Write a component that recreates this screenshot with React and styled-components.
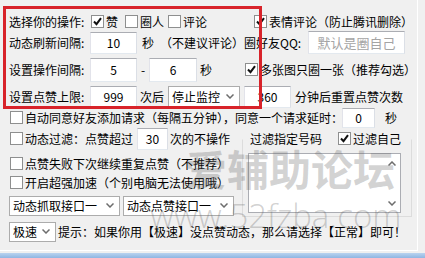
import React from 'react';
import styled, { createGlobalStyle } from 'styled-components';

const GlobalStyle = createGlobalStyle`
  html, body {
    margin: 0;
    padding: 0;
    background: #f0f0f0;
  }
  body {
    width: 425px;
    height: 258px;
    overflow: hidden;
    font-family: "Noto Sans CJK SC", "Microsoft YaHei", sans-serif;
    font-size: 12px;
    color: #000;
  }
`;

const Window = styled.div`
  position: relative;
  width: 425px;
  height: 258px;
  background: #f0f0f0;
  display: flex;
  flex-direction: column;
  overflow: hidden;
`;

const Panel = styled.div`
  width: 418px;
  height: 251px;
  box-sizing: border-box;
  padding: 11px 0 0 9px;
  border-right: 1px solid #fff;
  border-bottom: 1px solid #fff;
  display: flex;
  flex-direction: column;
`;

const FrameBottom = styled.div`
  margin-top: 2px;
  height: 5px;
  background: linear-gradient(#b9d3ef, #8fb6e2);
`;

const Row = styled.div`
  display: flex;
  align-items: center;
  height: 21px;
  flex: none;
  margin-top: ${p => p.$mt || 0}px;
  white-space: nowrap;
`;

const Cell = styled.div`
  display: flex;
  align-items: center;
  width: ${p => (p.$w ? `${p.$w}px` : 'auto')};
  flex: none;
  margin-left: ${p => p.$ml || 0}px;
`;

const Label = styled.span`
  display: inline-block;
  width: ${p => (p.$w ? `${p.$w}px` : 'auto')};
  margin-left: ${p => p.$ml || 0}px;
  text-align: ${p => p.$align || 'left'};
  flex: none;
  line-height: 16px;
`;

const TextBox = styled.div`
  box-sizing: border-box;
  width: ${p => p.$w}px;
  height: ${p => p.$h || 22}px;
  margin-left: ${p => p.$ml || 0}px;
  background: #fff;
  border: 1px solid #abadb3;
  border-color: #abadb3 #dbdfe6 #e3e9ef #e2e3ea;
  display: flex;
  align-items: center;
  justify-content: center;
  color: ${p => (p.$hint ? '#a4a4a4' : '#000')};
  font-size: ${p => (p.$hint ? 13 : 12)}px;
  flex: none;
`;

const Combo = styled.div`
  box-sizing: border-box;
  width: ${p => p.$w}px;
  height: ${p => p.$h || 20}px;
  margin-left: ${p => p.$ml || 0}px;
  background: #fff;
  border: 1px solid #acacac;
  display: flex;
  align-items: center;
  justify-content: space-between;
  padding: 0 5px 0 3px;
  flex: none;
`;

const Chevron = ({ up }) => (
  <svg width="8" height="5" viewBox="0 0 8 5">
    <path
      d={up ? 'M0.5 4.5 L4 1 L7.5 4.5' : 'M0.5 0.5 L4 4 L7.5 0.5'}
      fill="none"
      stroke="#6d6d6d"
      strokeWidth="1.5"
    />
  </svg>
);

const Box = styled.span`
  box-sizing: border-box;
  width: 13px;
  height: 13px;
  background: #fff;
  border: 1px solid #8e8f8f;
  display: inline-flex;
  align-items: center;
  justify-content: center;
  flex: none;
`;

const CheckWrap = styled.span`
  display: inline-flex;
  align-items: center;
  gap: 2px;
  margin-left: ${p => p.$ml || 0}px;
  flex: none;
`;

const Check = ({ on, children, ml }) => (
  <CheckWrap $ml={ml}>
    <Box>
      {on && (
        <svg width="9" height="9" viewBox="0 0 9 9">
          <path d="M1 4.5 L3.5 7.2 L8 1.2" fill="none" stroke="#111" strokeWidth="2" />
        </svg>
      )}
    </Box>
    <span>{children}</span>
  </CheckWrap>
);

const Lower = styled.div`
  display: grid;
  grid-template-columns: 233px 170px;
`;

const Column = styled.div`
  display: flex;
  flex-direction: column;
`;

const Group = styled.div`
  display: flex;
  flex-direction: column;
  width: 170px;
`;

const GroupHead = styled.div`
  display: flex;
  align-items: center;
  height: 21px;
  white-space: nowrap;
`;

const GroupBody = styled.div`
  box-sizing: border-box;
  height: 78px;
  margin-top: -10px;
  border: 1px solid #dcdcdc;
  border-top-color: transparent;
  padding: 13px 0 0 5px;
`;

const Memo = styled.div`
  box-sizing: border-box;
  width: 153px;
  height: 60px;
  background: #fff;
  border: 1px solid #abadb3;
  display: flex;
  justify-content: flex-end;
`;

const ScrollBar = styled.div`
  width: 16px;
  display: flex;
  flex-direction: column;
  justify-content: space-between;
  align-items: center;
  padding: 7px 0 6px;
`;

const RedMark = styled.div`
  position: absolute;
  left: 3px;
  top: 6px;
  width: 259px;
  height: 103px;
  box-sizing: border-box;
  border: 3px solid #d8232a;
  pointer-events: none;
`;

const Watermark = styled.div`
  position: absolute;
  left: ${p => p.$x}px;
  top: ${p => p.$y}px;
  font-family: ${p => (p.$url ? '"Open Sans", "Liberation Sans", sans-serif' : '"Noto Sans CJK SC", sans-serif')};
  font-size: ${p => p.$size}px;
  font-weight: ${p => (p.$url ? 300 : 700)};
  line-height: 1;
  color: rgba(100, 100, 100, ${p => (p.$url ? 0.3 : 0.28)});
  white-space: nowrap;
  pointer-events: none;
`;

export default function App() {
  return (
    <Window>
      <GlobalStyle />
      <Panel>
        <Row>
          <Cell $w={235}>
            <Label $w={82}>选择你的操作:</Label>
            <Check on>赞</Check>
            <Check ml={7}>圈人</Check>
            <Check ml={4}>评论</Check>
          </Cell>
          <Cell $ml={10}>
            <Check on>表情评论（防止腾讯删除）</Check>
          </Cell>
        </Row>

        <Row>
          <Cell $w={235}>
            <Label $w={81}>动态刷新间隔:</Label>
            <TextBox $w={47}>10</TextBox>
            <Label $ml={5}>秒</Label>
            <Label $ml={6}>（不建议评论）</Label>
          </Cell>
          <Cell>
            <Label $w={64}>圈好友QQ:</Label>
            <TextBox $w={97} $h={23} $hint>默认是圈自己</TextBox>
          </Cell>
        </Row>

        <Row $mt={6}>
          <Cell $w={235}>
            <Label $w={81}>设置操作间隔:</Label>
            <TextBox $w={47} $h={24}>5</TextBox>
            <Label $w={12} $align="center">-</Label>
            <TextBox $w={48} $h={24}>6</TextBox>
            <Label $ml={3}>秒</Label>
          </Cell>
          <Cell $ml={1}>
            <Check on>多张图只圈一张（推荐勾选）</Check>
          </Cell>
        </Row>

        <Row $mt={6}>
          <Label $w={81}>设置点赞上限:</Label>
          <TextBox $w={47}>999</TextBox>
          <Label $ml={3}>次后</Label>
          <Combo $w={72} $h={21} $ml={4}>
            <span>停止监控</span>
            <Chevron />
          </Combo>
          <TextBox $w={47} $ml={4}>360</TextBox>
          <Label $ml={4}>分钟后重置点赞次数</Label>
        </Row>

        <Row>
          <Check ml={1}>自动同意好友添加请求（每隔五分钟），同意一个请求延时：</Check>
          <TextBox $w={33} $h={20} $ml={-1}>0</TextBox>
          <Label $ml={10}>秒</Label>
        </Row>

        <Lower>
          <Column>
            <Row>
              <Check ml={1}>动态过滤：点赞超过</Check>
              <TextBox $w={31} $ml={4}>30</TextBox>
              <Label $ml={2}>次的不操作</Label>
            </Row>
            <Row $mt={4}>
              <Check ml={1}>点赞失败下次继续重复点赞（不推荐）</Check>
            </Row>
            <Row $mt={-2}>
              <Check ml={1}>开启超强加速（个别电脑无法使用哦）</Check>
            </Row>
            <Row $mt={2}>
              <Combo $w={111}>
                <span>动态抓取接口一</span>
                <Chevron />
              </Combo>
              <Combo $w={111} $ml={3}>
                <span>动态点赞接口一</span>
                <Chevron />
              </Combo>
            </Row>
          </Column>
          <Group>
            <GroupHead>
              <Label $w={88} $ml={8}>过滤指定号码</Label>
              <Check on>过滤自己</Check>
            </GroupHead>
            <GroupBody>
              <Memo>
                <ScrollBar>
                  <Chevron up />
                  <Chevron />
                </ScrollBar>
              </Memo>
            </GroupBody>
          </Group>
        </Lower>

        <Row $mt={4}>
          <Combo $w={47}>
            <span>极速</span>
            <Chevron />
          </Combo>
          <Label $ml={2}>提示：如果你用【极速】没点赞动态，那么请选择【正常】即可！</Label>
        </Row>
      </Panel>
      <FrameBottom />

      <RedMark />
      <Watermark $x={185} $y={147} $size={42}>爱辅助论坛</Watermark>
      <Watermark $x={150} $y={199} $size={33} $url>www.52fzba.com</Watermark>
    </Window>
  );
}
